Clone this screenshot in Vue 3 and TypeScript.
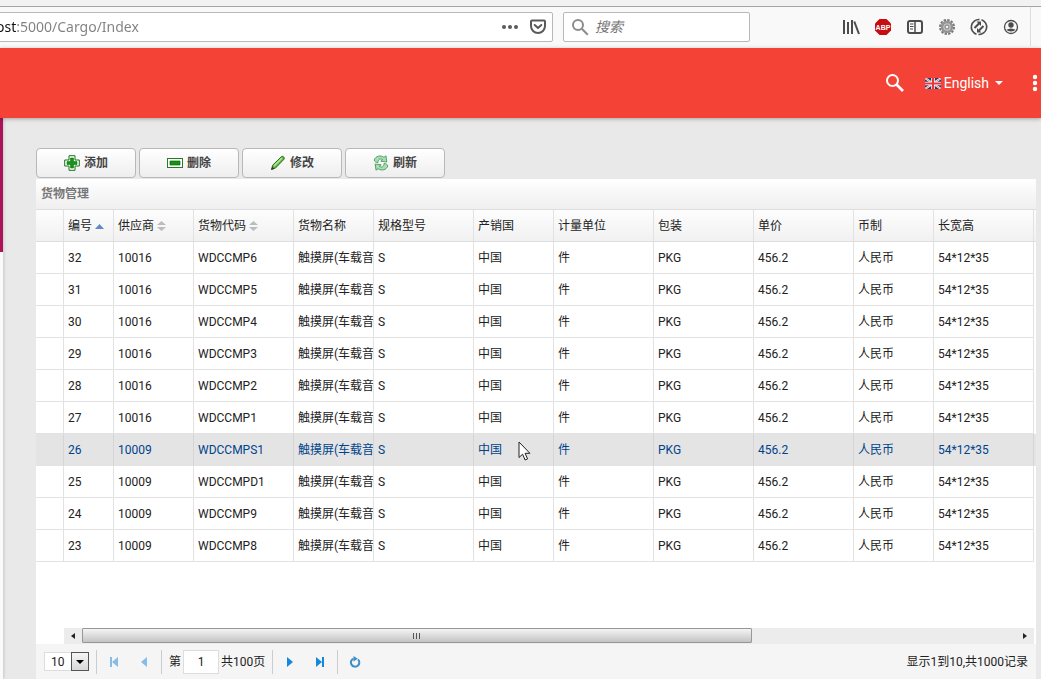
<script setup lang="ts">
import { computed, ref } from 'vue'

interface Column {
  key: keyof Cargo
  title: string
  width: string
  sort?: 'asc' | 'none'
}
interface Cargo {
  id: number
  supplier: string
  code: string
  name: string
  spec: string
  country: string
  unit: string
  pack: string
  price: string
  currency: string
  size: string
}

const columns: Column[] = [
  { key: 'id', title: '编号', width: 'w50', sort: 'asc' },
  { key: 'supplier', title: '供应商', width: 'w80', sort: 'none' },
  { key: 'code', title: '货物代码', width: 'w100', sort: 'none' },
  { key: 'name', title: '货物名称', width: 'w80' },
  { key: 'spec', title: '规格型号', width: 'w100' },
  { key: 'country', title: '产销国', width: 'w80' },
  { key: 'unit', title: '计量单位', width: 'w100' },
  { key: 'pack', title: '包装', width: 'w100' },
  { key: 'price', title: '单价', width: 'w100' },
  { key: 'currency', title: '币制', width: 'w80' },
  { key: 'size', title: '长宽高', width: 'w100' },
]

const source: [number, string, string][] = [
  [32, '10016', 'WDCCMP6'],
  [31, '10016', 'WDCCMP5'],
  [30, '10016', 'WDCCMP4'],
  [29, '10016', 'WDCCMP3'],
  [28, '10016', 'WDCCMP2'],
  [27, '10016', 'WDCCMP1'],
  [26, '10009', 'WDCCMPS1'],
  [25, '10009', 'WDCCMPD1'],
  [24, '10009', 'WDCCMP9'],
  [23, '10009', 'WDCCMP8'],
]
const rows: Cargo[] = source.map(([id, supplier, code]) => ({
  id,
  supplier,
  code,
  name: '触摸屏(车载音',
  spec: 'S',
  country: '中国',
  unit: '件',
  pack: 'PKG',
  price: '456.2',
  currency: '人民币',
  size: '54*12*35',
}))

const activeId = ref(26)
const url = ref('ost:5000/Cargo/Index')
const keyword = ref('')
const pageSize = ref('10')
const page = ref('1')
const visibleShare = ref(0.717)
const thumbStyle = computed(() => ({ width: `${visibleShare.value * 100}%` }))
</script>

<template>
  <div class="screen">
    <div class="tabs-edge"></div>
    <div class="nav">
      <div class="url-box">
        <input v-model="url" class="url" aria-label="URL" spellcheck="false" />
        <button class="plain" aria-label="More">
          <svg width="18" height="18" viewBox="0 0 18 18" fill="#5a5a5a"><circle cx="3" cy="9" r="2" /><circle cx="9" cy="9" r="2" /><circle cx="15" cy="9" r="2" /></svg>
        </button>
        <button class="plain" aria-label="Pocket">
          <svg width="18" height="18" viewBox="0 0 18 18" fill="none" stroke="#5a5a5a" stroke-width="2" stroke-linecap="round" stroke-linejoin="round"><path d="M3 2.500h12c.7 0 1 .4 1 1V8a7 7 0 0 1-14 0V3.500c0-.6.3-1 1-1z" /><path d="M5.700 7 9 10l3.300-3" /></svg>
        </button>
      </div>
      <div class="search-box">
        <svg width="18" height="18" viewBox="0 0 18 18" fill="none" stroke="#8c8c8c" stroke-width="2"><circle cx="7" cy="7" r="5" /><path d="m10.800 10.800 6 6" /></svg>
        <input v-model="keyword" class="search" placeholder="搜索" aria-label="搜索" />
      </div>
      <div class="tools">
        <button class="plain" aria-label="Library">
          <svg width="18" height="18" viewBox="0 0 18 18" fill="none" stroke="#4c4c4c" stroke-width="2"><path d="M2 2v14M6 4v12M10 2v14" /><path d="m12.300 3.500 4.700 12.500" /></svg>
        </button>
        <button class="plain" aria-label="Adblock Plus">
          <svg width="18" height="18" viewBox="0 0 18 18"><path d="M5.500 1h7L17 5.500v7L12.500 17h-7L1 12.500v-7z" fill="#c70d12" /><text x="9" y="12" text-anchor="middle" class="abp">ABP</text></svg>
        </button>
        <button class="plain" aria-label="Sidebar">
          <svg width="18" height="18" viewBox="0 0 18 18" fill="none" stroke="#4c4c4c"><rect x="2" y="3" width="14" height="12" rx="2" stroke-width="2" /><path d="M9 3v12" stroke-width="1.500" /><path d="M4 6h3.500M4 8.500h3.500M4 11h3" /></svg>
        </button>
        <button class="plain" aria-label="Settings">
          <svg width="18" height="18" viewBox="0 0 18 18" fill="none"><circle cx="9" cy="9" r="7" stroke="#777" stroke-width="2" stroke-dasharray="2.400 1.265" /><circle cx="9" cy="9" r="5" fill="#c4c4c4" stroke="#949494" stroke-width="2.500" /><circle cx="9" cy="9" r="2" fill="#f2f2f2" stroke="#777" /></svg>
        </button>
        <button class="plain" aria-label="Sync">
          <svg width="18" height="18" viewBox="0 0 18 18" fill="none" stroke="#4c4c4c" stroke-width="1.600"><path d="M6.500 16.200A7.500 7.500 0 0 1 9.500 1.600M11.500 1.800A7.500 7.500 0 0 1 8.500 16.400" /><path d="m4.500 10 5-5M8.500 13l5-5" stroke-width="2" /><path d="M6.500 3.500H11V8zM7 10v4.500h4.500z" fill="#4c4c4c" stroke="none" /></svg>
        </button>
        <button class="plain" aria-label="Account">
          <svg width="18" height="18" viewBox="0 0 18 18"><circle cx="9" cy="9" r="6.500" fill="none" stroke="#4c4c4c" stroke-width="1.300" /><circle cx="9" cy="7" r="2.700" fill="#4c4c4c" /><path d="M4.500 11.500c2 .2 2-1 4.500-1s2.500 1.200 4.500 1C12.500 14 5.500 14 4.500 11.500z" fill="#4c4c4c" /></svg>
        </button>
      </div>
    </div>

    <header class="topbar">
      <button class="plain top-search" aria-label="Search">
        <svg width="20" height="20" viewBox="0 0 20 20" fill="none" stroke="#fff" stroke-width="2"><circle cx="7.500" cy="7.500" r="5.500" /><path d="m11.500 11.500 6.500 6.500" stroke-width="2.600" /></svg>
      </button>
      <button class="plain language">
        <svg width="16" height="11" viewBox="0 0 16 11"><path fill="#2b3672" d="M0 0h16v11H0z" /><path d="m0 0 16 11M16 0 0 11" stroke="#fff" stroke-width="2" /><path d="m0 0 16 11M16 0 0 11" stroke="#c33" stroke-width=".6" /><path d="M8 0v11M0 5.500h16" stroke="#fff" stroke-width="3.500" /><path d="M8 0v11M0 5.500h16" stroke="#e33838" stroke-width="2" /></svg>
        <span>English</span>
        <svg class="caret" width="8" height="4" viewBox="0 0 8 4"><path fill="#fff" d="M0 0h8L4 4z" /></svg>
      </button>
      <button class="plain more" aria-label="Menu">
        <svg width="6" height="18" viewBox="0 0 6 18" fill="#fff"><circle cx="3" cy="3" r="2.200" /><circle cx="3" cy="9" r="2.200" /><circle cx="3" cy="15" r="2.200" /></svg>
      </button>
    </header>

    <div class="main">
      <aside class="side"><div class="profile"></div></aside>
      <main class="content">
        <div class="actions">
          <button class="action">
            <svg width="16" height="16" viewBox="0 0 16 16"><path d="M5 .7h6V5h4.300v6H11v4.300H5V11H.7V5H5z" fill="#fff" stroke="#1c701c" /><path d="M6.500 3h3v3.500H13v3H9.500V13h-3V9.500H3v-3h3.500z" fill="#149314" stroke="#0b7a0b" stroke-width=".6" /></svg>
            添加
          </button>
          <button class="action">
            <svg width="16" height="16" viewBox="0 0 16 16"><rect x=".5" y="3.500" width="15" height="9" fill="#fff" stroke="#287a28" /><path d="M3 6h10v4H3z" fill="#159215" stroke="#076b07" stroke-width=".7" /></svg>
            删除
          </button>
          <button class="action">
            <svg width="16" height="16" viewBox="0 0 16 16"><path d="m1.500 14.500 1.200-4.300L11.500 1.500c1.500-.8 3.300 1 2.600 2.600L5.500 13z" fill="#62b83e" stroke="#24701b" /><path d="m4 11 8-8" stroke="#bde6a6" stroke-width="1.500" /><path d="m1.200 14.800 1.100-3 2 2z" fill="#333" /></svg>
            修改
          </button>
          <button class="action">
            <svg width="16" height="16" viewBox="0 0 16 16" fill="#a9dfb0" stroke="#398f50" stroke-width=".8" stroke-linejoin="round"><path d="M1.200 5C2.500 1 7.500-.2 11 2.300L13 .8l.8 6.200-6-.8 1.800-1.500C7.500 3.200 5 4 5 7.500 3 7.500 1.500 6.500 1.200 5z" /><path d="M14.800 11C13.500 15 8.500 16.200 5 13.700L3 15.200 2.200 9l6 .8-1.800 1.500c2.100 1.500 4.600.7 4.600-2.800 2 0 3.500 1 3.800 2.500z" /></svg>
            刷新
          </button>
        </div>

        <section class="panel">
          <h2 class="title">货物管理</h2>
          <div class="grid">
            <table>
              <colgroup>
                <col class="w27" />
                <col v-for="c in columns" :key="c.key" :class="c.width" />
                <col />
              </colgroup>
              <thead>
                <tr>
                  <th></th>
                  <th v-for="c in columns" :key="c.key" scope="col">
                    {{ c.title }}
                    <svg v-if="c.sort === 'asc'" width="9" height="5" viewBox="0 0 9 5" class="sort-up"><path fill="#6288c8" d="M0 5 4.500 0 9 5z" /></svg>
                    <svg v-else-if="c.sort" width="9" height="10" viewBox="0 0 9 10" class="sort-both"><path fill="#bcbcbc" d="M0 4 4.500 0 9 4zM0 6h9l-4.500 4z" /></svg>
                  </th>
                  <th class="rest"></th>
                </tr>
              </thead>
              <tbody>
                <tr v-for="r in rows" :key="r.id" :class="{ active: r.id === activeId }">
                  <td></td>
                  <td v-for="c in columns" :key="c.key">{{ r[c.key] }}</td>
                  <td class="rest"></td>
                </tr>
              </tbody>
            </table>
          </div>
          <div class="scrollbar">
            <button class="plain arrow" aria-label="Scroll left"><svg width="4" height="6" viewBox="0 0 4 6"><path d="M4 0v6L0 3z" fill="#222" /></svg></button>
            <div class="track">
              <div class="thumb" :style="thumbStyle"><i></i><i></i><i></i></div>
            </div>
            <button class="plain arrow" aria-label="Scroll right"><svg width="4" height="6" viewBox="0 0 4 6"><path d="M0 0v6l4-3z" fill="#222" /></svg></button>
          </div>
          <footer class="pager">
            <div class="select">
              <select v-model="pageSize" aria-label="Page size"><option>10</option><option>20</option><option>50</option></select>
              <span class="drop"><svg width="8" height="4" viewBox="0 0 8 4"><path d="M0 0h8L4 4z" fill="#000" /></svg></span>
            </div>
            <span class="divider"></span>
            <button class="plain step dim" aria-label="First page"><svg width="10" height="10" viewBox="0 0 10 10"><path d="M1 0h2v10H1zM9 0v10L3 5z" /></svg></button>
            <button class="plain step dim" aria-label="Previous page"><svg width="10" height="10" viewBox="0 0 10 10"><path d="M8 0v10L2 5z" /></svg></button>
            <span class="divider"></span>
            <label for="page" class="page-label">第</label>
            <input id="page" v-model="page" class="page" />
            <span class="total">共100页</span>
            <span class="divider"></span>
            <button class="plain step" aria-label="Next page"><svg width="10" height="10" viewBox="0 0 10 10"><path d="M2 0v10l6-5z" /></svg></button>
            <button class="plain step" aria-label="Last page"><svg width="10" height="10" viewBox="0 0 10 10"><path d="M1 0v10l6-5zM7 0h2v10H7z" /></svg></button>
            <span class="divider"></span>
            <button class="plain step" aria-label="Reload"><svg width="12" height="12" viewBox="0 0 12 12"><path d="M9 3.400A4.200 4.200 0 1 1 4.500 2.600" fill="none" stroke="#3d8fc8" stroke-width="2" /><path d="M4.500 0v5.400L8.800 2.700z" fill="#3d8fc8" /></svg></button>
            <span class="info">显示1到10,共1000记录</span>
          </footer>
        </section>
      </main>
    </div>

    <svg class="pointer" width="14" height="21" viewBox="0 0 14 21"><path d="M1 1v15.500l3.600-3.300 2.500 5.800 2.500-1.100-2.500-5.600h4.800z" fill="#fff" stroke="#222" /></svg>
  </div>
</template>

<style>
body {
  margin: 0;
}
</style>

<style scoped>
.screen {
  position: relative;
  display: flex;
  flex-direction: column;
  min-height: 100vh;
  overflow: hidden;
  background: #e9e9e9;
  color: #222;
  font: 12px/16px Roboto, "Noto Sans CJK SC", sans-serif;
}
* {
  box-sizing: border-box;
}
svg {
  flex: none;
  display: block;
}
input,
button,
select {
  font: inherit;
  color: inherit;
  margin: 0;
}
.plain {
  display: flex;
  align-items: center;
  justify-content: center;
  padding: 0;
  border: 0;
  background: none;
}
.tabs-edge {
  height: 7px;
  background: #f2f2f2;
  border-bottom: 1px solid #a5a5a5;
}
.nav {
  display: flex;
  align-items: center;
  height: 41px;
  padding: 0 10px 2px 0;
  background: #f9f9f9;
}
.url-box,
.search-box {
  display: flex;
  align-items: center;
  min-width: 0;
  height: 30px;
  background: #fff;
  border: 1px solid #b8b8b8;
  border-radius: 2px;
}
.url-box {
  flex: 0 1 558px;
  gap: 10px;
  margin-left: -5px;
  padding-right: 5px;
}
.url {
  flex: 1;
  min-width: 0;
  height: 26px;
  padding: 0;
  border: 0;
  outline: 0;
  font: 14px/20px "Noto Sans", "Open Sans", sans-serif;
  color: transparent;
  background: linear-gradient(90deg, #111 20px, #808080 20px);
  background-clip: text;
}
.search-box {
  flex: 0 1 187px;
  gap: 6px;
  margin-left: 10px;
  padding-left: 7px;
}
.search {
  flex: 1;
  min-width: 0;
  padding: 0;
  border: 0;
  outline: 0;
  background: none;
  font: 14px/20px "Open Sans", "Noto Sans CJK SC", sans-serif;
}
.search::placeholder {
  color: #757575;
  font-style: italic;
  opacity: 1;
}
.tools {
  display: flex;
  gap: 14px;
  align-items: center;
  height: 39px;
  margin-left: auto;
  padding-right: 10px;
  border-right: 1px solid #ddd;
}
.abp {
  fill: #fff;
  font: bold 7px "Liberation Sans", sans-serif;
}
.topbar {
  z-index: 1;
  display: flex;
  align-items: center;
  justify-content: flex-end;
  height: 70px;
  padding-right: 3px;
  background: #f44336;
  box-shadow: 0 1px 4px rgba(0, 0, 0, 0.3);
  color: #fff;
}
.top-search {
  margin-right: 20px;
}
.language {
  gap: 3px;
  font-size: 14px;
  line-height: 20px;
}
.caret {
  margin-left: 3px;
}
.more {
  margin-left: 29px;
}
.main {
  flex: 1;
  display: flex;
}
.side {
  width: 3px;
  background: #fafafa;
  box-shadow: 1px 0 3px rgba(0, 0, 0, 0.15);
}
.profile {
  height: 134px;
  background: #ad1457;
}
.content {
  flex: 1;
  min-width: 0;
  display: flex;
  flex-direction: column;
  padding: 30px 5px 0 33px;
}
.actions {
  display: flex;
  gap: 3px;
}
.action {
  display: flex;
  align-items: center;
  justify-content: center;
  gap: 4px;
  width: 100px;
  height: 30px;
  padding: 0;
  border: 1px solid #b8b8b8;
  border-radius: 4px;
  background: linear-gradient(#fff, #eee);
  color: #444;
  font-weight: bold;
}
.panel {
  flex: 1;
  display: flex;
  flex-direction: column;
  margin-top: 1px;
  background: #fff;
}
.title {
  height: 31px;
  margin: 0;
  padding: 7px 5px;
  border-bottom: 1px solid #ddd;
  background: linear-gradient(#fff, #efefef);
  color: #777;
  font-size: 12px;
  line-height: 16px;
  font-weight: bold;
}
.grid {
  flex: 1;
  overflow: hidden;
}
table {
  width: 100%;
  table-layout: fixed;
  border-collapse: separate;
  border-spacing: 0;
}
.w27 {
  width: 28px;
}
.w50 {
  width: 50px;
}
.w80 {
  width: 80px;
}
.w100 {
  width: 100px;
}
th,
td {
  height: 32px;
  padding: 0 0 0 4px;
  border-right: 1px solid #e2e2e2;
  border-bottom: 1px solid #e2e2e2;
  overflow: hidden;
  white-space: nowrap;
  text-align: left;
  font-weight: normal;
}
th {
  border-bottom: 1px solid #ddd;
  background: linear-gradient(#fdfdfd, #f1f1f1);
}
.rest {
  padding: 0;
  border-right: 0;
}
td.rest {
  border-bottom: 0;
}
.sort-up,
.sort-both {
  display: inline-block;
  vertical-align: middle;
}
.active td {
  border-right-color: #d6d6d6;
  background: #e4e4e4;
  color: #00438a;
}
.scrollbar {
  display: flex;
  height: 16px;
  margin: 0 2px 0 28px;
  background: #ececec;
}
.arrow {
  width: 18px;
}
.track {
  flex: 1;
  display: flex;
}
.thumb {
  display: flex;
  align-items: center;
  justify-content: center;
  gap: 2px;
  height: 15px;
  border: 1px solid #979797;
  border-radius: 1px;
  background: linear-gradient(#f4f4f4, #dcdcdc 50%, #c4c4c4);
}
.thumb i {
  width: 1px;
  height: 6px;
  background: #555;
}
.pager {
  display: flex;
  align-items: center;
  height: 35px;
  padding: 0 8px;
  background: #f5f5f5;
}
.select {
  position: relative;
  width: 45px;
  height: 19px;
}
select {
  width: 100%;
  height: 19px;
  padding: 0 0 0 6px;
  appearance: none;
  border: 1px solid #ddd;
  border-radius: 0;
  background: #fff;
}
.drop {
  position: absolute;
  top: 0;
  right: 0;
  display: flex;
  align-items: center;
  justify-content: center;
  width: 18px;
  height: 19px;
  border: 1px solid #555;
  background: linear-gradient(#f5f5f5, #d8d8d8);
  pointer-events: none;
}
.divider {
  width: 1px;
  height: 24px;
  margin: 0 7px;
  background: #ccc;
}
.step {
  width: 20px;
  height: 24px;
  fill: #1489dc;
}
.step + .step {
  margin-left: 10px;
}
.dim {
  fill: #86bce6;
}
.page {
  width: 36px;
  height: 24px;
  margin: 0 2px;
  padding: 0;
  border: 1px solid #ddd;
  background: #fff;
  text-align: center;
}
.info {
  margin-left: auto;
}
.pointer {
  position: absolute;
  left: 518px;
  top: 441px;
}
</style>
